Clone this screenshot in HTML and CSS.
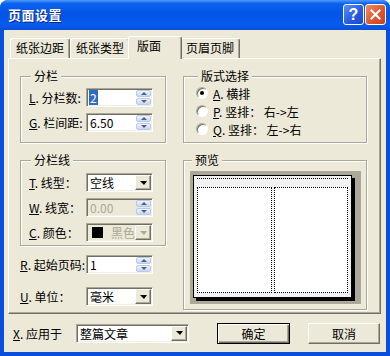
FILE: index.html
```html
<!DOCTYPE html>
<html lang="zh-CN">
<head>
    <meta charset="UTF-8">
    <title>页面设置</title>
    <link rel="stylesheet" href="styles.css">
</head>
<body>

<div class="window">

    <div class="titlebar">
        <span class="titlebar-text">页面设置</span>
        <div class="title-buttons">
            <div class="btn-help">?</div>
            <div class="btn-close">
                <svg width="11" height="11" viewBox="0 0 11 11"><path d="M1.5 1.5L9.5 9.5M9.5 1.5L1.5 9.5" stroke="#fff" stroke-width="2.2" stroke-linecap="square"/></svg>
            </div>
        </div>
    </div>

    <div class="dialog">

        <div class="tabs">
            <div class="tab">纸张边距</div>
            <div class="tab">纸张类型</div>
            <div class="tab active">版面</div>
            <div class="tab">页眉页脚</div>
        </div>

        <div class="panel">

            <!-- colonne gauche, haut -->
            <fieldset class="group group-cols">
                <legend>分栏</legend>
                <div class="row">
                    <label class="lbl"><u>L</u>. 分栏数:</label>
                    <div class="field">
                        <span class="selected">2</span>
                        <div class="spin"><div class="spin-up"><i></i></div><div class="spin-down"><i></i></div></div>
                    </div>
                </div>
                <div class="row">
                    <label class="lbl"><u>G</u>. 栏间距:</label>
                    <div class="field">
                        <span>6.50</span>
                        <div class="spin"><div class="spin-up"><i></i></div><div class="spin-down"><i></i></div></div>
                    </div>
                </div>
            </fieldset>

            <!-- colonne droite, haut -->
            <fieldset class="group group-mode">
                <legend>版式选择</legend>
                <div class="radios">
                    <div class="radio-row"><span class="radio"><span class="dot"></span></span><label><u>A</u>. 横排</label></div>
                    <div class="radio-row"><span class="radio"></span><label><u>P</u>. 竖排： 右-&gt;左</label></div>
                    <div class="radio-row"><span class="radio"></span><label><u>Q</u>. 竖排： 左-&gt;右</label></div>
                </div>
            </fieldset>

            <!-- colonne gauche, bas -->
            <div class="left-bottom">
                <fieldset class="group group-line">
                    <legend>分栏线</legend>
                    <div class="row">
                        <label class="lbl"><u>T</u>. 线型：</label>
                        <div class="combo"><span>空线</span><div class="combo-btn"><i></i></div></div>
                    </div>
                    <div class="row">
                        <label class="lbl"><u>W</u>. 线宽：</label>
                        <div class="field disabled">
                            <span>0.00</span>
                            <div class="spin"><div class="spin-up"><i></i></div><div class="spin-down"><i></i></div></div>
                        </div>
                    </div>
                    <div class="row">
                        <label class="lbl"><u>C</u>. 颜色：</label>
                        <div class="combo disabled"><span class="swatch"></span><span>黑色</span><div class="combo-btn"><i></i></div></div>
                    </div>
                </fieldset>

                <div class="row row-start">
                    <label class="lbl wide"><u>R</u>. 起始页码:</label>
                    <div class="field">
                        <span>1</span>
                        <div class="spin"><div class="spin-up"><i></i></div><div class="spin-down"><i></i></div></div>
                    </div>
                </div>

                <div class="row row-unit">
                    <label class="lbl wide"><u>U</u>. 单位：</label>
                    <div class="combo"><span>毫米</span><div class="combo-btn"><i></i></div></div>
                </div>
            </div>

            <!-- colonne droite, bas -->
            <fieldset class="group group-preview">
                <legend>预览</legend>
                <div class="preview">
                    <div class="paper">
                        <div class="header-line"></div>
                        <div class="columns">
                            <div class="column"></div>
                            <div class="column"></div>
                        </div>
                    </div>
                </div>
            </fieldset>

        </div>

        <div class="footer">
            <label class="lbl-apply"><u>X</u>. 应用于</label>
            <div class="combo combo-apply"><span>整篇文章</span><div class="combo-btn"><i></i></div></div>
            <div class="button default">确定</div>
            <div class="button">取消</div>
        </div>

    </div>
</div>

</body>
</html>
```

FILE: styles.css
```css
* {box-sizing: border-box}
body {margin: 0; background: #fff; font: 12px "Noto Sans CJK SC", "Liberation Sans", sans-serif; color: #000}
u {text-decoration: underline; text-underline-offset: 1px}

/* ----- Fenêtre ----- */

.window {
    width: 390px;
    height: 356px;
    display: flex;
    flex-direction: column;
    background: #0A4EDD;
    border-radius: 8px 8px 0 0;
    overflow: hidden;
}

.titlebar {
    height: 30px;
    flex: none;
    display: flex;
    align-items: center;
    justify-content: space-between;
    padding: 0 4px 1px 8px;
    background: linear-gradient(#4D9BFA 0%, #0B62EE 12%, #0455E6 45%, #065BEE 85%, #0A4DD6 100%);
}

.titlebar-text {
    color: #fff;
    font-weight: bold;
    font-size: 13px;
    letter-spacing: 0.5px;
    text-shadow: 1px 1px #0A2A8C;
}

.title-buttons {display: flex; gap: 1px}

.btn-help,
.btn-close {
    width: 21px;
    height: 21px;
    border: 1px solid #fff;
    border-radius: 3px;
    display: flex;
    justify-content: center;
    align-items: center;
}
.btn-help {
    background: linear-gradient(135deg, #5C8FF5, #2458E0 60%, #1D49CF);
    color: #fff;
    font: bold 16px "Liberation Sans", sans-serif;
}
.btn-close {
    background: linear-gradient(135deg, #F08A64, #E0572C 55%, #C8401C);
}

.dialog {
    flex: 1;
    margin: 0 4px 4px;
    background: #ECE9D8;
    padding: 6px 5px 0 4px;
    display: flex;
    flex-direction: column;
}

/* ----- Onglets ----- */

.tabs {
    display: flex;
    align-items: flex-end;
    height: 22px;
    padding-left: 2px;
}

.tab {
    height: 20px;
    line-height: 18px;
    padding: 0 5px 0 5px;
    border: 1px solid;
    border-bottom: 0;
    border-color: #fff #716F64 #716F64 #fff;
    box-shadow: inset -1px 0 #ACA899;
    border-radius: 3px 3px 0 0;
    background: #ECE9D8;
}

.tab.active {
    height: 23px;
    margin: 0 -2px -1px;
    padding: 0 20px 0 8px;
    position: relative;
    z-index: 1;
}

.panel {
    height: 256px;
    flex: none;
    border: 1px solid;
    border-color: #fff #716F64 #716F64 #fff;
    box-shadow: inset -1px -1px #ACA899;
    padding: 10px 13px 0 11px;
    display: grid;
    grid-template-columns: 146px 184px;
    column-gap: 17px;
    row-gap: 10px;
    align-content: start;
}

/* ----- Groupes ----- */

.group {
    margin: 0;
    min-width: 0;
    border: 1px solid #ACA899;
    box-shadow: inset 1px 1px #fff, 1px 1px #fff;
    padding: 5px 8px 4px 8px;
}

.group legend {
    padding: 0 3px;
    margin-left: 2px;
    line-height: 14px;
    background: #ECE9D8;
}

.group-line {padding: 6px 8px 3px 8px}

.row {
    display: flex;
    align-items: center;
    height: 19px;
}
.row + .row {margin-top: 6px}

.lbl {width: 57px; white-space: nowrap}
.lbl.wide {width: 66px}

.left-bottom {display: flex; flex-direction: column}
.left-bottom .row-start {margin-top: 9px}
.left-bottom .row-unit {margin-top: 13px}

/* ----- Champs ----- */

.field,
.combo {
    width: 67px;
    height: 19px;
    background: #fff;
    border: 1px solid;
    border-color: #ACA899 #fff #fff #ACA899;
    box-shadow: inset 1px 1px #716F64, inset -1px -1px #F1EFE2;
    padding: 1px 1px 1px 2px;
    display: flex;
    align-items: center;
    line-height: 15px;
}

.field span,
.combo span {padding-left: 1px}

.selected {
    background: #316AC5;
    color: #fff;
    padding: 0 1px;
}

.field.disabled {background: #ECE9D8; color: #ACA899}

.spin {
    margin-left: auto;
    width: 15px;
    height: 15px;
    display: flex;
    flex-direction: column;
    gap: 1px;
}

.spin-up,
.spin-down {
    flex: 1;
    border: 1px solid #B9C9EF;
    border-radius: 2px;
    background: linear-gradient(#EEF3FD, #C9D7F6);
    display: flex;
    justify-content: center;
    align-items: center;
}

.spin-up i {border-left: 3px solid transparent; border-right: 3px solid transparent; border-bottom: 3px solid #4D6185}
.spin-down i {border-left: 3px solid transparent; border-right: 3px solid transparent; border-top: 3px solid #4D6185}

.combo-btn {
    margin-left: auto;
    width: 16px;
    height: 15px;
    background: #ECE9D8;
    border: 1px solid;
    border-color: #fff #716F64 #716F64 #fff;
    box-shadow: inset -1px -1px #ACA899;
    display: flex;
    justify-content: center;
    align-items: center;
}
.combo-btn i {border-left: 4px solid transparent; border-right: 3px solid transparent; border-top: 4px solid #000}

.combo.disabled {background: #ECE9D8; color: #ACA899}
.combo.disabled .combo-btn i {border-top-color: #ACA899}

.swatch {
    width: 11px;
    height: 11px;
    background: #000;
    margin: 0 7px 0 3px;
    padding: 0 !important;
}

/* ----- Boutons radio ----- */

.group-mode {padding: 5px 8px 4px 12px}
.radios {margin-top: -4px}

.radio-row {
    height: 18px;
    display: flex;
    align-items: center;
    gap: 5px;
}

.radio {
    width: 12px;
    height: 12px;
    border-radius: 50%;
    background: #fff;
    border: 1px solid;
    border-color: #ACA899 #fff #fff #ACA899;
    box-shadow: inset 1px 1px #716F64;
    display: flex;
    justify-content: center;
    align-items: center;
}
.dot {width: 4px; height: 4px; border-radius: 50%; background: #000}

/* ----- Aperçu ----- */

.group-preview {padding: 4px 5px 5px 6px}

.preview {
    height: 133px;
    background: #ACA899;
    padding: 4px 5px 6px 3px;
}

.paper {
    height: 100%;
    width: 159px;
    background: #F2F2F2;
    border: 1px solid #000;
    box-shadow: 3px 3px 0 #000;
    padding: 2px 2px 0 2px;
}

.header-line {border-top: 1px dotted #000; margin: 0 1px}

.columns {
    display: flex;
    gap: 2px;
    margin: 8px 1px 0 1px;
    height: 106px;
}

.column {
    flex: 1;
    background: #fff;
    border: 1px dotted #000;
}

/* ----- Bas ----- */

.footer {
    flex: 1;
    display: flex;
    align-items: center;
    padding: 0 0 0 5px;
}

.lbl-apply {width: 63px}
.combo-apply {width: 113px}

.button {
    width: 73px;
    height: 21px;
    margin-left: 28px;
    border: 1px solid;
    border-color: #fff #716F64 #716F64 #fff;
    box-shadow: inset -1px -1px #ACA899;
    display: flex;
    justify-content: center;
    align-items: center;
}
.button + .button {margin-left: 18px; width: 72px}
.button.default {
    border: 1px solid #000;
    box-shadow: inset 1px 1px #fff, inset -1px -1px #716F64, inset -2px -2px #ACA899;
}
```
